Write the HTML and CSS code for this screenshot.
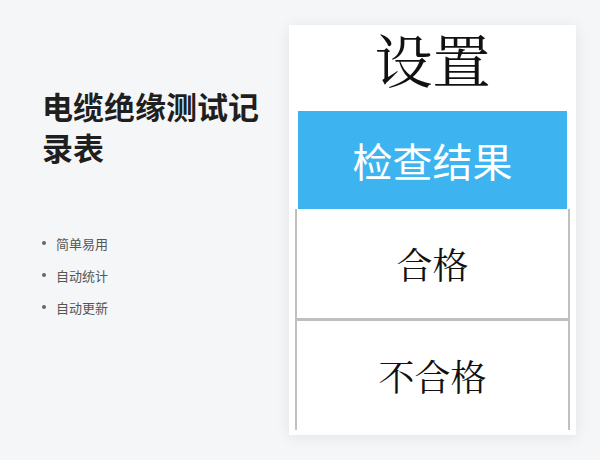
FILE: index.html
```html
<!DOCTYPE html>
<html lang="zh-CN">
<head>
<meta charset="utf-8">
<title>电缆绝缘测试记录表</title>
<link rel="stylesheet" href="styles.css">
</head>
<body>
<div class="page">
  <section class="intro">
    <h1 class="intro-title">电缆绝缘测试记录表</h1>
    <ul class="features">
      <li class="feature">简单易用</li>
      <li class="feature">自动统计</li>
      <li class="feature">自动更新</li>
    </ul>
  </section>
  <section class="panel">
    <div class="panel-title"><span class="panel-title-text">设置</span></div>
    <div class="panel-body">
      <div class="result-head">检查结果</div>
      <div class="options">
        <div class="option">合格</div>
        <div class="option">不合格</div>
      </div>
    </div>
  </section>
</div>
</body>
</html>
```

FILE: styles.css
```css
html, body {
  margin: 0;
  padding: 0;
}
body {
  width: 600px;
  height: 460px;
  background: #f5f6f8;
  font-family: "Noto Sans CJK SC", "Noto Sans", sans-serif;
  overflow: hidden;
}
.page {
  display: flex;
  align-items: flex-start;
}
.intro {
  width: 230px;
  margin-left: 42px;
  padding-top: 85px;
}
.intro-title {
  margin: 0;
  font-size: 31px;
  line-height: 41px;
  font-weight: 700;
  color: #1f1f1f;
}
.features {
  list-style: none;
  margin: 60px 0 0 0;
  padding: 0;
}
.feature {
  display: flex;
  align-items: center;
  height: 32px;
  font-size: 13px;
  color: #555;
}
.feature::before {
  content: "";
  width: 4px;
  height: 4px;
  border-radius: 50%;
  background: #666;
  margin-right: 10px;
  flex: none;
}
.panel {
  margin-left: 17px;
  margin-top: 25px;
  width: 287px;
  height: 410px;
  background: #fff;
  box-shadow: 0 2px 14px rgba(0, 0, 0, 0.08);
  display: flex;
  flex-direction: column;
}
.panel-title {
  height: 86px;
  display: flex;
  justify-content: center;
  align-items: flex-start;
}
.panel-title-text {
  display: block;
  padding-top: 1px;
  line-height: 64px;
  font-family: "Noto Serif CJK SC", "Noto Sans CJK SC", serif;
  font-size: 58px;
  color: #111;
}
.panel-body {
  padding: 0 6px;
}
.result-head {
  margin: 0 3px;
  height: 98px;
  background: #3db4f0;
  color: #fff;
  display: flex;
  align-items: center;
  justify-content: center;
  font-size: 40px;
}
.options {
  border-left: 2.5px solid #c0c0c0;
  border-right: 2.5px solid #c0c0c0;
}
.option {
  height: 109px;
  display: flex;
  align-items: center;
  justify-content: center;
  font-family: "Noto Serif CJK SC", "Noto Sans CJK SC", serif;
  font-size: 36px;
  color: #111;
}
.option + .option {
  border-top: 3px solid #c0c0c0;
}
```
